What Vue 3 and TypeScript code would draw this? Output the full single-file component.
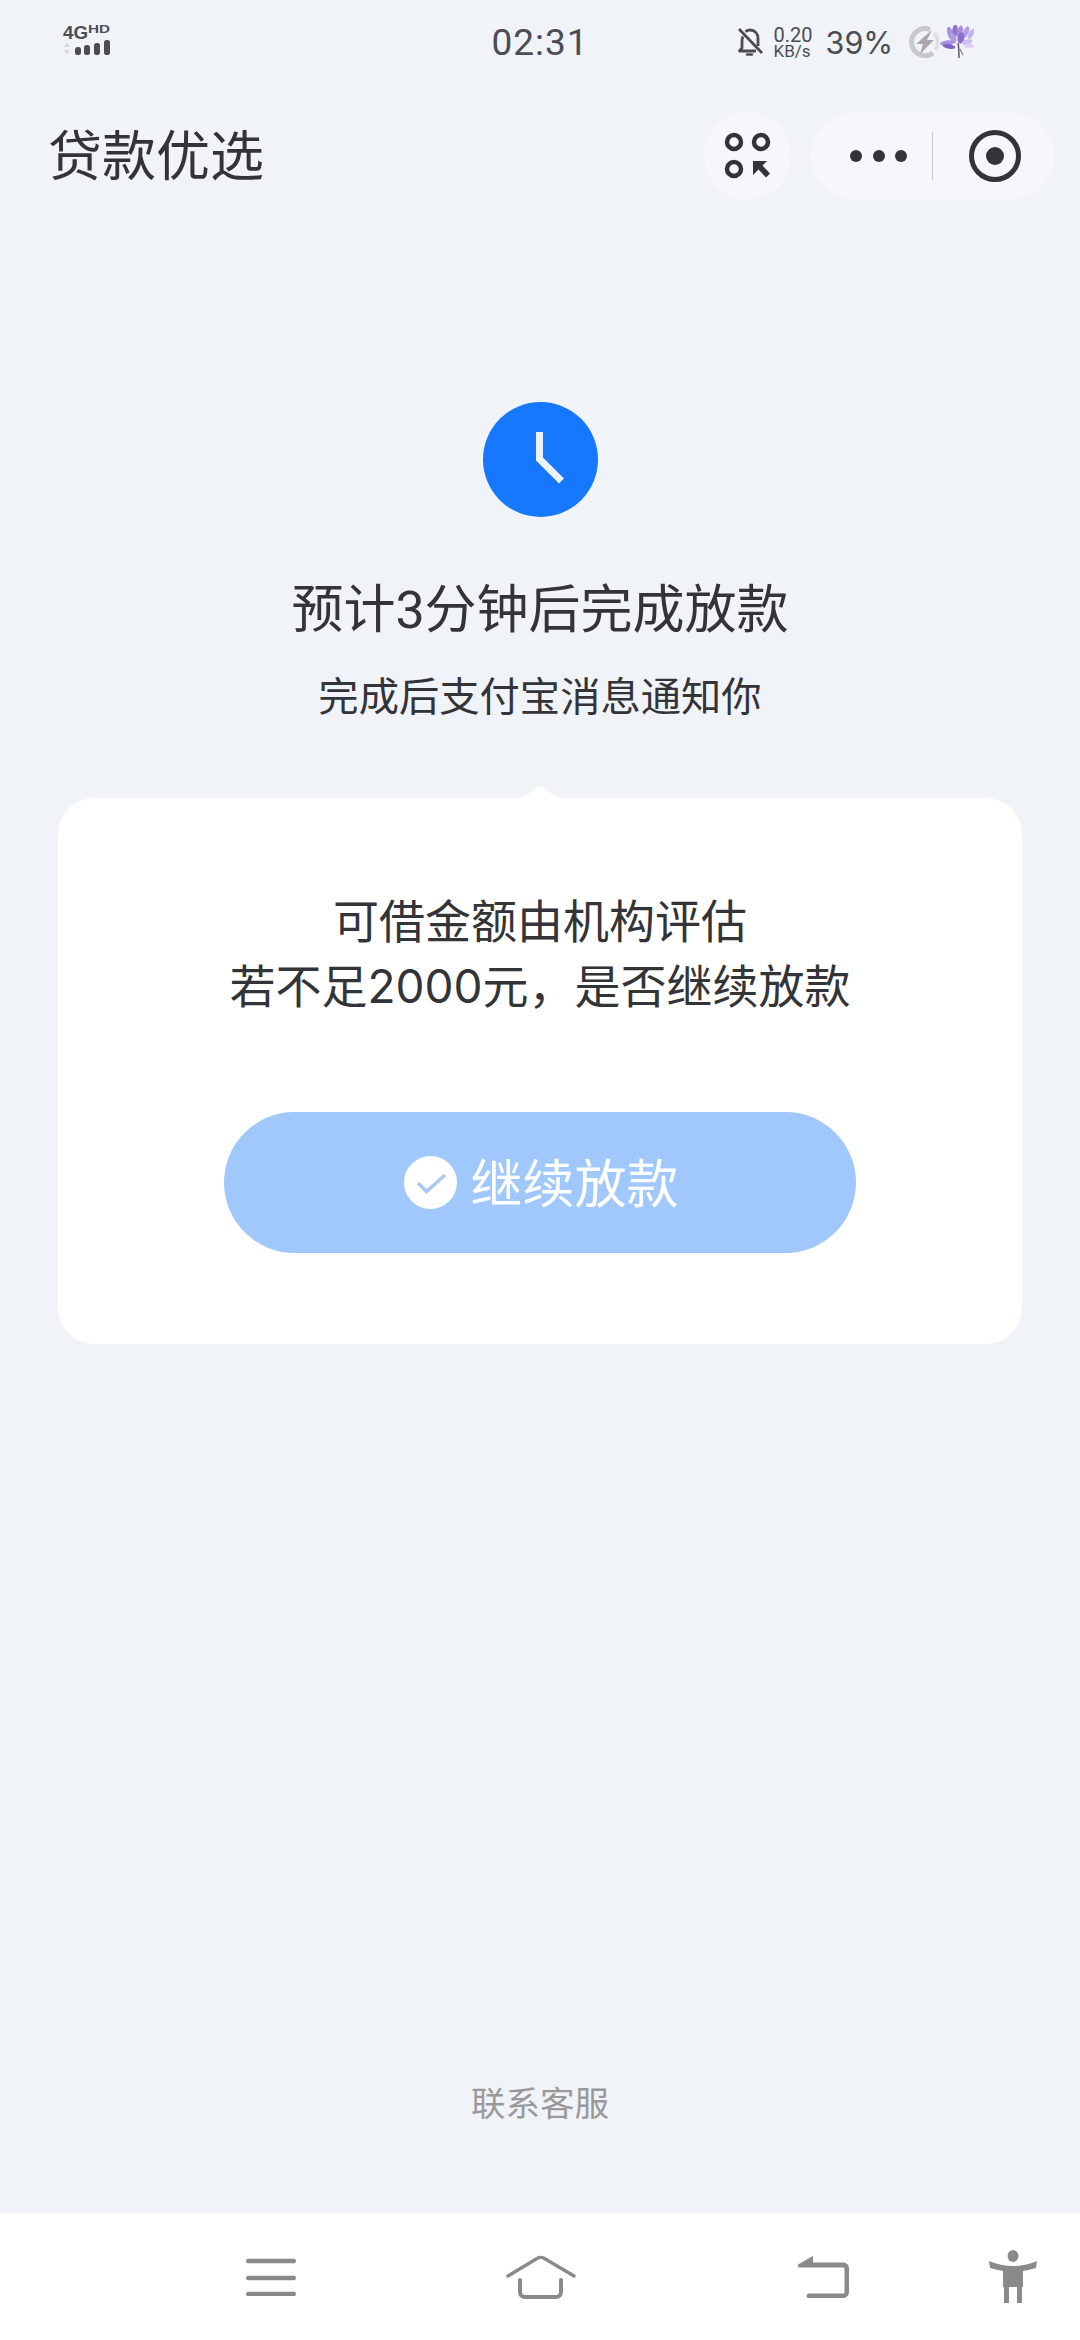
<script setup lang="ts">
// petals of the little lotus sticker in the status bar: [cx, cy, rx, ry, angle, colour]
const petals: [number, number, number, number, number, string][] = [
  [10, 8, 2.6, 6.5, -14, "#a58ddc"],
  [15, 6, 2.8, 6.5, 4, "#8f73cf"],
  [20, 7, 2.8, 6.5, 12, "#a68fdc"],
  [26, 7, 2.6, 6, 22, "#b39fe2"],
  [31, 9, 2.4, 5.5, 30, "#c3b3ea"],
  [13, 13, 3.2, 5.5, -20, "#b09ae0"],
  [21, 13, 3.4, 5.5, 10, "#8c70cc"],
  [7, 18, 7, 2.6, -6, "#a88fdd"],
  [9, 21.500, 6.500, 2.2, 10, "#7f63c0"],
  [27, 17, 5.500, 2.6, -14, "#cbbdec"],
  [29, 21, 5, 2.2, 6, "#ddd2f2"],
];

const navGaps = { home: 210, back: 222, person: 140 };
</script>

<template>
  <div class="page">
    <div class="status">
      <svg class="signal" width="52" height="34" viewBox="0 0 52 34">
        <text x="3" y="15" class="net" textLength="25" lengthAdjust="spacingAndGlyphs">4G</text>
        <text x="28" y="9" class="hd" textLength="22" lengthAdjust="spacingAndGlyphs">HD</text>
        <path d="M7 19l3 4H4zM7 30l-3-4h6z" fill="#d5d7dc" />
        <rect x="15" y="23" width="6" height="8" rx="2.5" fill="#4b4d53" />
        <rect x="24" y="21" width="6" height="10" rx="2.5" fill="#4b4d53" />
        <rect x="34" y="19" width="6" height="12" rx="2.5" fill="#4b4d53" />
        <rect x="44" y="16" width="6" height="15" rx="2.5" fill="#4b4d53" />
      </svg>
      <div class="time">02:31</div>
      <div class="status-right">
        <svg width="26" height="30" viewBox="0 0 26 30" fill="none" stroke="#4b4d53" stroke-width="2.8">
          <path d="M6 9.500C5.200 11 5 12.200 5 14v7l-2.500 3H19M8.500 4.600C10 3.400 11.400 3 13 3c4.800 0 8 3.600 8 8.500V19" stroke-linejoin="round" />
          <path d="M2 2l23 24" />
          <path d="M10 27.500h5" stroke-width="2.400" stroke-linecap="round" />
        </svg>
        <div class="speed">
          <span class="speed-num">0.20</span>
          <span class="speed-unit">KB/s</span>
        </div>
        <div class="battery">39%</div>
        <svg class="bolt" width="33" height="32" viewBox="0 0 33 32">
          <path d="M22 3.500A13.500 13.500 0 1 0 25 27" fill="none" stroke="#c9c9c9" stroke-width="5" />
          <path d="M26 7a14 14 0 0 1 1.500 17" fill="none" stroke="#dedede" stroke-width="3.500" />
          <path d="M24 4L8 18h7l-3 10 14-14h-7z" fill="#ada6ad" />
        </svg>
        <svg class="flower" width="34" height="34" viewBox="0 0 34 34">
          <ellipse
            v-for="(p, i) in petals"
            :key="i"
            :cx="p[0]"
            :cy="p[1]"
            :rx="p[2]"
            :ry="p[3]"
            :fill="p[5]"
            :transform="`rotate(${p[4]} ${p[0]} ${p[1]})`"
          />
          <path d="M18 18c1 5 1 10 1 15" fill="none" stroke="#5d4c66" stroke-width="1.400" />
          <path d="M20 24l3 6" fill="none" stroke="#8a7a94" stroke-width="1.200" />
        </svg>
      </div>
    </div>

    <div class="titlebar">
      <div class="app-name">贷款优选</div>
      <div class="capsule-round">
        <svg width="50" height="50" viewBox="0 0 50 50" fill="none" stroke="#333438" stroke-width="4.500">
          <circle cx="11" cy="11" r="7" />
          <circle cx="38" cy="11" r="7" />
          <circle cx="11" cy="38" r="7" />
          <path d="M30 30h14l-4.500 4.500 7.500 8-4 4-7.500-8L30 44z" fill="#333438" stroke="none" />
        </svg>
      </div>
      <div class="capsule">
        <div class="dots"><i></i><i></i><i></i></div>
        <div class="sep"></div>
        <svg width="54" height="54" viewBox="0 0 54 54">
          <circle cx="27" cy="27" r="23.500" fill="none" stroke="#333438" stroke-width="5" />
          <circle cx="27" cy="27" r="9" fill="#333438" />
        </svg>
      </div>
    </div>

    <main class="main">
      <div class="clock">
        <svg width="115" height="115" viewBox="0 0 115 115">
          <path d="M56.500 30v27l22 22" fill="none" stroke="#eef3fb" stroke-width="7" />
        </svg>
      </div>
      <h1 class="head">预计3分钟后完成放款</h1>
      <p class="sub">完成后支付宝消息通知你</p>

      <section class="card">
        <svg class="caret" width="50" height="14" viewBox="0 0 50 14">
          <path d="M0 14C10 13 19 5 22 2c2-2 4-2 6 0 3 3 12 11 22 12z" fill="#fff" />
        </svg>
        <p class="ask">可借金额由机构评估<br />若不足<span class="num">2000</span>元，是否继续放款</p>
        <button class="go" type="button">
          <svg width="53" height="53" viewBox="0 0 53 53">
            <circle cx="26.500" cy="26.500" r="26.500" fill="#fff" />
            <path d="M14 27l8.500 8.500L41 19" fill="none" stroke="#a9c9f3" stroke-width="3.600" />
          </svg>
          <span class="go-label">继续放款</span>
        </button>
      </section>

      <div class="contact">联系客服</div>
    </main>

    <nav class="nav">
      <svg width="50" height="38" viewBox="0 0 50 38" fill="none" stroke="#8a8a8a" stroke-width="4.400" stroke-linecap="round">
        <path d="M2.200 3h45.600M2.200 20h45.600M2.200 36h45.600" />
      </svg>
      <svg :style="{ marginLeft: navGaps.home + 'px' }" width="70" height="44" viewBox="0 0 70 44" fill="none" stroke="#8a8a8a" stroke-width="3.400" stroke-linecap="round" stroke-linejoin="round">
        <path d="M2 21L31 3.500c2.500-1.500 5-1.500 7.500 0L68 21" />
        <path d="M14 25v12c0 3 2 5 5 5h31c3 0 5-2 5-5V25" stroke-width="4" />
      </svg>
      <svg :style="{ marginLeft: navGaps.back + 'px' }" width="51" height="42" viewBox="0 0 51 42" fill="none">
        <path d="M0 8.500L15 0v6.500h30c3.500 0 6 2.500 6 6V36c0 3.500-2.500 6-6 6H11c-1.500 0-2.500-1-2.500-2s1-2.500 2.500-2.500h34c1 0 1.500-.5 1.500-1.500V13c0-1-.5-1.500-1.500-1.500H2c-2 0-3-1.500-2-3z" fill="#8a8a8a" />
      </svg>
      <svg :style="{ marginLeft: navGaps.person + 'px' }" width="48" height="53" viewBox="0 0 48 53">
        <ellipse cx="24" cy="6" rx="5.500" ry="6" fill="#8a8a8a" />
        <path d="M0 11Q12 16 24 16T48 11L47 18Q40 20 34 21V37H33V53H28V37H20V53H15V37H14V21Q8 20 1 18Z" fill="#8a8a8a" />
      </svg>
    </nav>
  </div>
</template>

<style>
html,
body {
  margin: 0;
  background: #f0f3f8;
}
</style>

<style scoped>
.page {
  width: 1080px;
  height: 2340px;
  display: flex;
  flex-direction: column;
  background: #f0f3f8;
  color: #333438;
  font-family: Roboto, "Noto Sans CJK SC", sans-serif;
}

.status {
  height: 84px;
  display: grid;
  grid-template-columns: 1fr auto 1fr;
  align-items: center;
}
.signal {
  margin-left: 60px;
  margin-top: -2px;
}
.net {
  font: 700 18px "Liberation Sans", sans-serif;
  fill: #4b4d53;
}
.hd {
  font: 700 11px "Liberation Sans", sans-serif;
  fill: #4b4d53;
}
.time {
  font-size: 37px;
  color: #4b4d53;
  letter-spacing: 1px;
}
.status-right {
  display: flex;
  align-items: center;
  color: #4b4d53;
  margin-left: 148px;
}
.speed {
  display: flex;
  flex-direction: column;
  margin-left: 11px;
}
.speed-num {
  font-size: 20px;
  line-height: 18px;
}
.speed-unit {
  font-size: 17px;
  line-height: 14px;
}
.battery {
  font-family: Inter, sans-serif;
  font-size: 30.500px;
  margin-left: 13px;
}
.bolt {
  margin-left: 15px;
}
.flower {
  margin-left: -1px;
}

.titlebar {
  margin-top: 28px;
  height: 88px;
  display: flex;
  align-items: center;
  padding-left: 48px;
}
.app-name {
  flex: 1;
  font-size: 54px;
  line-height: 88px;
  padding-top: 3px;
}
.capsule-round {
  width: 87px;
  height: 88px;
  box-sizing: border-box;
  border-radius: 50%;
  background: #f6f7fa;
  display: flex;
  align-items: center;
  justify-content: center;
}
.capsule {
  width: 243px;
  height: 88px;
  margin: 0 26px 0 20px;
  border-radius: 44px;
  background: #f6f7fa;
  display: flex;
  align-items: center;
}
.dots {
  display: flex;
  gap: 10.500px;
  margin-left: 39px;
}
.dots i {
  width: 12px;
  height: 12px;
  border-radius: 50%;
  background: #333438;
}
.sep {
  width: 1px;
  height: 48px;
  background: #c6c8cc;
  margin: 0 35px 0 25px;
}

.main {
  flex: 1;
  display: flex;
  flex-direction: column;
  align-items: center;
  padding-top: 202px;
}
.clock {
  width: 115px;
  height: 115px;
  border-radius: 50%;
  background: #1677ff;
}
.clock svg {
  display: block;
}
.head {
  margin: 58px 0 0;
  font-size: 52px;
  font-weight: 400;
  line-height: 72px;
}
.sub {
  margin: 21px 0 0;
  font-size: 40.300px;
  line-height: 60px;
}
.card {
  position: relative;
  box-sizing: border-box;
  width: 964px;
  height: 546px;
  margin-top: 70px;
  padding-top: 92px;
  border-radius: 36px;
  background: #fff;
  display: flex;
  flex-direction: column;
  align-items: center;
}
.caret {
  position: absolute;
  top: -13px;
  left: 457px;
}
.ask {
  margin: 0;
  font-size: 46px;
  line-height: 64px;
  text-align: center;
}
.num {
  font-family: Inter, sans-serif;
}
.go {
  margin-top: 93px;
  width: 632px;
  height: 141px;
  padding: 0 0 0 3px;
  border: 0;
  border-radius: 71px;
  background: #a0c8fc;
  color: #fff;
  font-family: inherit;
  font-size: 52px;
  display: flex;
  align-items: center;
  justify-content: center;
  gap: 13px;
}
.go-label {
  margin-top: -5px;
}
.contact {
  margin-top: auto;
  margin-bottom: 84px;
  font-size: 34.500px;
  line-height: 50px;
  color: #999;
}

.nav {
  height: 127px;
  background: #fff;
  display: flex;
  align-items: center;
  padding-left: 246px;
}
</style>
